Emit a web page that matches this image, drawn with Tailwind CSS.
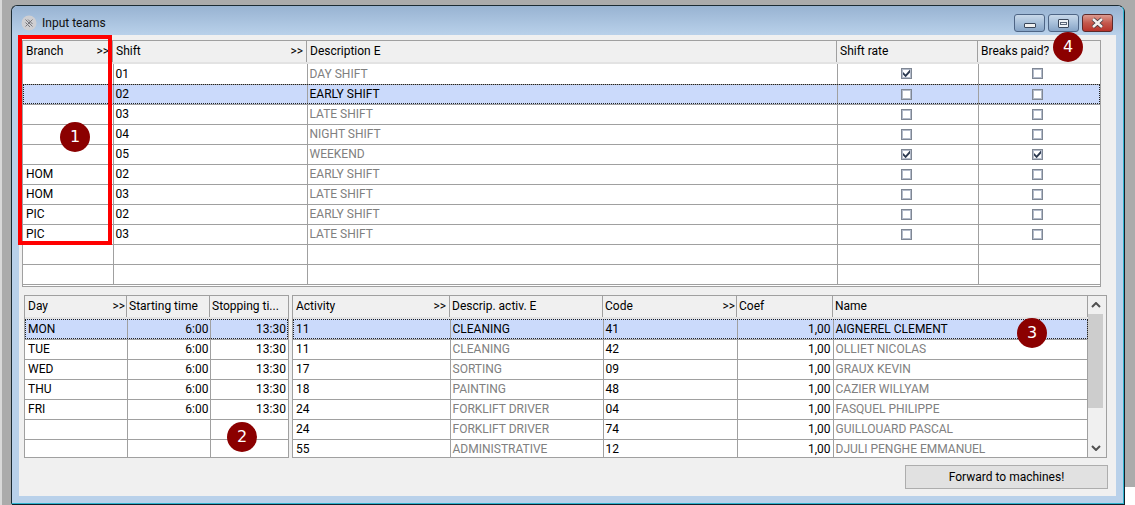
<!DOCTYPE html>
<html lang="en">
<head>
  <meta charset="UTF-8">
  <title>Input teams</title>
  <script src="https://cdn.jsdelivr.net/npm/@tailwindcss/browser@4"></script>
</head>
<body class="relative h-[505px] w-[1135px] overflow-hidden bg-[#ababab] text-[12px] leading-[20px] text-black font-['Roboto',sans-serif]">
  <svg class="hidden">
    <symbol id="box" viewBox="0 0 11 11">
      <defs><linearGradient id="fill" x1="0" y1="0" x2="1" y2="1"><stop offset="0" stop-color="#c3cbdb"/><stop offset="1" stop-color="#ffffff"/></linearGradient></defs>
      <rect x="0.5" y="0.5" width="10" height="10" fill="#fff" stroke="#7f8794"/>
      <rect x="1.5" y="1.5" width="8" height="8" fill="url(#fill)" stroke="#b4bccb"/>
    </symbol>
    <symbol id="tick" viewBox="0 0 11 11">
      <use href="#box"/>
      <path d="M2 4l2.6 2.6L9 1.6v2.8L4.6 9.2 2 6.6z" fill="#2d3a50"/>
    </symbol>
  </svg>

  <!-- page strip and the corner outside the screenshot's window -->
  <div class="absolute left-0 top-0 h-full w-[2px] bg-[#d9d9d9]"></div>
  <div class="absolute left-[1125px] top-[487px] h-[18px] w-[10px] bg-white"></div>

  <div class="relative ml-[11px] mt-[5px] h-[499px] w-[1113px] rounded-t-[6px] border border-[#1c2b33] border-b-[#2fb4cf] border-r-[#2fb4cf] bg-[#b9d1ea] shadow-[1px_1px_0_#10202a]">
    <!-- title bar -->
    <div class="flex h-[29px] items-start justify-between rounded-t-[6px] bg-gradient-to-b from-[#98b3d2] to-[#b9d1ea] pl-[9px] pr-[10px]">
      <div class="mt-[7px] flex items-center gap-[5px]">
        <svg width="16" height="16" viewBox="0 0 16 16"><circle cx="8" cy="8" r="7.5" fill="#cfcfd2"/><path d="M4.5 4.5l7 7M4.5 7.5l4.5 4.5M7 4.5l4.5 4.5M11.5 4.5l-7 7" stroke="#77777c" fill="none"/></svg>
        <span class="text-[#101010]">Input teams</span>
      </div>
      <div class="mt-[8px] flex gap-[3px]">
        <div class="flex h-[18px] w-[31px] items-center justify-center rounded-[3px] border border-[#4e6585] bg-gradient-to-b from-[#c9d9ea] via-[#a8c0da] to-[#86a4c6]"><div class="mt-[4px] h-[5px] w-[12px] rounded-[1px] border border-[#39465a] bg-[#f0f0f0]"></div></div>
        <div class="flex h-[18px] w-[31px] items-center justify-center rounded-[3px] border border-[#4e6585] bg-gradient-to-b from-[#c9d9ea] via-[#a8c0da] to-[#86a4c6]"><div class="flex h-[9px] w-[11px] items-center justify-center rounded-[1px] border border-[#39465a] bg-[#eef2f6]"><div class="h-[3px] w-[7px] border border-[#5a6678]"></div></div></div>
        <div class="flex h-[18px] w-[31px] items-center justify-center rounded-[3px] border border-[#5e2a2a] bg-gradient-to-b from-[#dc9a90] via-[#c4584c] to-[#b8322a]">
          <svg width="15" height="12" viewBox="0 0 15 12"><path d="M3 2l9 8M12 2l-9 8" stroke="#39323a" stroke-width="4"/><path d="M3 2l9 8M12 2l-9 8" stroke="#f4f0ee" stroke-width="2.6"/></svg>
        </div>
      </div>
    </div>

    <!-- client area -->
    <div class="mx-[7px] h-[461px] w-[1097px] bg-[#f0f0f0] pt-[5px]">
      <!-- teams table -->
      <div class="ml-[3px] h-[247px] w-[1079px] overflow-hidden border border-[#a0a0a0] bg-white">
        <div class="flex h-[23px] border-b-2 border-[#e3e3e3] bg-[#f0f0f0]">
          <div class="flex w-[90px] shrink-0 justify-between border-r border-[#a0a0a0] pl-[3px]">Branch<span class="pr-[3px]">&gt;&gt;</span></div>
          <div class="flex w-[194px] shrink-0 justify-between border-r border-[#a0a0a0] pl-[3px]">Shift<span class="pr-[3px]">&gt;&gt;</span></div>
          <div class="w-[530px] shrink-0 border-r border-[#a0a0a0] pl-[3px]">Description E</div>
          <div class="w-[141px] shrink-0 border-r border-[#a0a0a0] pl-[3px]">Shift rate</div>
          <div class="flex-1 pl-[3px]">Breaks paid?</div>
        </div>
        <table class="w-full table-fixed border-collapse leading-[18px] [&_td]:h-[20px] [&_td]:border [&_td]:border-[#a0a0a0] [&_td]:p-0 [&_td]:pl-[2px] [&_td]:pr-[5px] [&_tr_td:first-child]:border-l-0 [&_tr_td:first-child]:pl-[3px] [&_tr_td:last-child]:border-r-0 [&_tr:first-child_td]:border-t-0">
          <colgroup><col class="w-[90px]"><col class="w-[194px]"><col class="w-[530px]"><col class="w-[141px]"><col></colgroup>
          <tbody>
            <tr><td></td><td>01</td><td class="text-[#808080]">DAY SHIFT</td><td><svg class="mx-auto" width="11" height="11"><use href="#tick"/></svg></td><td><svg class="mx-auto" width="11" height="11"><use href="#box"/></svg></td></tr>
            <tr class="bg-[#cbdafb] outline-1 outline-dotted outline-[#222222] -outline-offset-1"><td></td><td>02</td><td>EARLY SHIFT</td><td><svg class="mx-auto" width="11" height="11"><use href="#box"/></svg></td><td><svg class="mx-auto" width="11" height="11"><use href="#box"/></svg></td></tr>
            <tr><td></td><td>03</td><td class="text-[#808080]">LATE SHIFT</td><td><svg class="mx-auto" width="11" height="11"><use href="#box"/></svg></td><td><svg class="mx-auto" width="11" height="11"><use href="#box"/></svg></td></tr>
            <tr><td></td><td>04</td><td class="text-[#808080]">NIGHT SHIFT</td><td><svg class="mx-auto" width="11" height="11"><use href="#box"/></svg></td><td><svg class="mx-auto" width="11" height="11"><use href="#box"/></svg></td></tr>
            <tr><td></td><td>05</td><td class="text-[#808080]">WEEKEND</td><td><svg class="mx-auto" width="11" height="11"><use href="#tick"/></svg></td><td><svg class="mx-auto" width="11" height="11"><use href="#tick"/></svg></td></tr>
            <tr><td>HOM</td><td>02</td><td class="text-[#808080]">EARLY SHIFT</td><td><svg class="mx-auto" width="11" height="11"><use href="#box"/></svg></td><td><svg class="mx-auto" width="11" height="11"><use href="#box"/></svg></td></tr>
            <tr><td>HOM</td><td>03</td><td class="text-[#808080]">LATE SHIFT</td><td><svg class="mx-auto" width="11" height="11"><use href="#box"/></svg></td><td><svg class="mx-auto" width="11" height="11"><use href="#box"/></svg></td></tr>
            <tr><td>PIC</td><td>02</td><td class="text-[#808080]">EARLY SHIFT</td><td><svg class="mx-auto" width="11" height="11"><use href="#box"/></svg></td><td><svg class="mx-auto" width="11" height="11"><use href="#box"/></svg></td></tr>
            <tr><td>PIC</td><td>03</td><td class="text-[#808080]">LATE SHIFT</td><td><svg class="mx-auto" width="11" height="11"><use href="#box"/></svg></td><td><svg class="mx-auto" width="11" height="11"><use href="#box"/></svg></td></tr>
            <tr><td></td><td></td><td></td><td></td><td></td></tr>
            <tr><td></td><td></td><td></td><td></td><td></td></tr>
          </tbody>
        </table>
      </div>

      <div class="ml-[5px] mt-[8px] flex gap-[3px]">
        <!-- days table -->
        <div class="h-[163px] w-[265px] overflow-hidden border border-[#a0a0a0] bg-white">
          <div class="flex h-[23px] border-b-2 border-[#e3e3e3] bg-[#f0f0f0]">
            <div class="flex w-[102px] shrink-0 justify-between border-r border-[#a0a0a0] pl-[3px]">Day<span class="pr-[1px]">&gt;&gt;</span></div>
            <div class="w-[83px] shrink-0 border-r border-[#a0a0a0] pl-[2px]">Starting time</div>
            <div class="flex-1 pl-[2px]">Stopping ti...</div>
          </div>
          <table class="w-[263px] table-fixed border-collapse leading-[18px] [&_td]:h-[20px] [&_td]:border [&_td]:border-[#a0a0a0] [&_td]:p-0 [&_td]:px-[1px] [&_tr_td:first-child]:border-l-0 [&_tr_td:first-child]:pl-[3px] [&_tr_td:last-child]:border-r-0 [&_tr_td:last-child]:pr-[2px] [&_tr:first-child_td]:border-t-0">
            <colgroup><col class="w-[102px]"><col class="w-[83px]"><col></colgroup>
            <tbody>
              <tr class="bg-[#cbdafb] outline-1 outline-dotted outline-[#222222] -outline-offset-1"><td>MON</td><td class="text-right">6:00</td><td class="text-right">13:30</td></tr>
              <tr><td>TUE</td><td class="text-right">6:00</td><td class="text-right">13:30</td></tr>
              <tr><td>WED</td><td class="text-right">6:00</td><td class="text-right">13:30</td></tr>
              <tr><td>THU</td><td class="text-right">6:00</td><td class="text-right">13:30</td></tr>
              <tr><td>FRI</td><td class="text-right">6:00</td><td class="text-right">13:30</td></tr>
              <tr><td></td><td></td><td></td></tr>
              <tr><td></td><td></td><td></td></tr>
            </tbody>
          </table>
        </div>

        <!-- staff table -->
        <div class="flex h-[163px] w-[815px] overflow-hidden border border-[#a0a0a0] bg-white">
          <div class="w-[795px] shrink-0">
            <div class="flex h-[23px] border-b-2 border-[#e3e3e3] bg-[#f0f0f0]">
              <div class="flex w-[157px] shrink-0 justify-between border-r border-[#a0a0a0] pl-[3px]">Activity<span class="pr-[3px]">&gt;&gt;</span></div>
              <div class="w-[153px] shrink-0 border-r border-[#a0a0a0] pl-[2px]">Descrip. activ. E</div>
              <div class="flex w-[134px] shrink-0 justify-between border-r border-[#a0a0a0] pl-[2px]">Code<span class="pr-[1px]">&gt;&gt;</span></div>
              <div class="w-[96px] shrink-0 border-r border-[#a0a0a0] pl-[2px]">Coef</div>
              <div class="flex-1 border-r border-[#a0a0a0] pl-[2px]">Name</div>
            </div>
            <table class="w-[795px] table-fixed border-collapse leading-[18px] [&_td]:h-[20px] [&_td]:border [&_td]:border-[#a0a0a0] [&_td]:p-0 [&_td]:px-[2px] [&_tr_td:first-child]:border-l-0 [&_tr_td:first-child]:pl-[3px] [&_tr:first-child_td]:border-t-0 [&_tr:last-child_td]:border-b-0">
              <colgroup><col class="w-[157px]"><col class="w-[153px]"><col class="w-[134px]"><col class="w-[96px]"><col></colgroup>
              <tbody>
                <tr class="bg-[#cbdafb] outline-1 outline-dotted outline-[#222222] -outline-offset-1"><td>11</td><td>CLEANING</td><td>41</td><td class="text-right">1,00</td><td>AIGNEREL CLEMENT</td></tr>
                <tr><td>11</td><td class="text-[#808080]">CLEANING</td><td>42</td><td class="text-right">1,00</td><td class="text-[#808080]">OLLIET NICOLAS</td></tr>
                <tr><td>17</td><td class="text-[#808080]">SORTING</td><td>09</td><td class="text-right">1,00</td><td class="text-[#808080]">GRAUX KEVIN</td></tr>
                <tr><td>18</td><td class="text-[#808080]">PAINTING</td><td>48</td><td class="text-right">1,00</td><td class="text-[#808080]">CAZIER WILLYAM</td></tr>
                <tr><td>24</td><td class="text-[#808080]">FORKLIFT DRIVER</td><td>04</td><td class="text-right">1,00</td><td class="text-[#808080]">FASQUEL PHILIPPE</td></tr>
                <tr><td>24</td><td class="text-[#808080]">FORKLIFT DRIVER</td><td>74</td><td class="text-right">1,00</td><td class="text-[#808080]">GUILLOUARD PASCAL</td></tr>
                <tr><td>55</td><td class="text-[#808080]">ADMINISTRATIVE</td><td>12</td><td class="text-right">1,00</td><td class="text-[#808080]">DJULI PENGHE EMMANUEL</td></tr>
              </tbody>
            </table>
          </div>
          <!-- scrollbar -->
          <div class="flex flex-1 flex-col bg-[#f0f0f0]">
            <svg class="mx-[3px] my-[6px]" width="10" height="6" viewBox="0 0 10 6"><path d="M1 5l4-4 4 4" stroke="#505050" stroke-width="2" fill="none"/></svg>
            <div class="h-[94px] w-[15px] bg-[#cdcdcd]"></div>
            <svg class="mx-[3px] mb-[6px] mt-auto" width="10" height="6" viewBox="0 0 10 6"><path d="M1 1l4 4 4-4" stroke="#505050" stroke-width="2" fill="none"/></svg>
          </div>
        </div>
      </div>

      <div class="mt-[7px] flex justify-end pr-[8px]">
        <button class="h-[24px] w-[203px] border border-[#adadad] bg-[#e1e1e1] text-center">Forward to machines!</button>
      </div>
    </div>

    <!-- annotations -->
    <div class="absolute left-[6px] top-[29px] h-[210px] w-[94px] border-[4px] border-[#ff0000]"></div>
    <div class="absolute left-[48px] top-[116px] flex h-[30px] w-[30px] items-center justify-center rounded-full bg-[#8b0000] text-[16px] text-white font-['DejaVu_Sans',sans-serif]">1</div>
    <div class="absolute left-[215px] top-[416px] flex h-[30px] w-[30px] items-center justify-center rounded-full bg-[#8b0000] text-[16px] text-white font-['DejaVu_Sans',sans-serif]">2</div>
    <div class="absolute left-[1005px] top-[312px] flex h-[30px] w-[30px] items-center justify-center rounded-full bg-[#8b0000] text-[16px] text-white font-['DejaVu_Sans',sans-serif]">3</div>
    <div class="absolute left-[1041px] top-[26px] flex h-[30px] w-[30px] items-center justify-center rounded-full bg-[#8b0000] text-[16px] text-white font-['DejaVu_Sans',sans-serif]">4</div>
  </div>
</body>
</html>
